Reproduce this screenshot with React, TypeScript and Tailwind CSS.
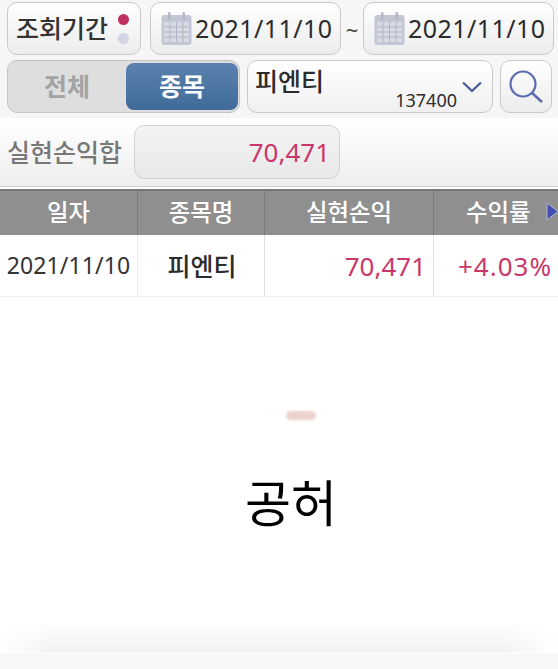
const font = { fontFamily: '"Noto Sans", "Noto Sans CJK KR", sans-serif' };

function Calendar() {
  return (
    <svg width="31" height="35" viewBox="0 0 31 35" className="shrink-0">
      <rect x="0.5" y="4" width="30" height="30" rx="3" fill="#c3c6d4" />
      <rect x="3" y="11" width="25" height="20" fill="#d9dbe4" />
      <path d="M3 16h25M3 21h25M3 26h25M9 11v20M15.500 11v20M22 11v20" stroke="#b0b3c4" strokeWidth="1" />
      <rect x="7" y="1" width="2.500" height="8" rx="1.200" fill="#b4b7c6" />
      <rect x="21.500" y="1" width="2.500" height="8" rx="1.200" fill="#b4b7c6" />
    </svg>
  );
}

function DateBox({ w }: { w: string }) {
  return (
    <div className={`${w} h-[53px] rounded-[10px] border border-[#c9c9c9] bg-gradient-to-b from-white to-[#ececec] flex items-center pl-[10px] gap-[3px]`}>
      <Calendar />
      <span className="text-[25px] leading-none tracking-[0.45px] text-[#2c2c2c]">2021/11/10</span>
    </div>
  );
}

export default function App() {
  return (
    <div style={font} className="w-[558px] h-[669px] bg-white flex flex-col overflow-hidden">
      <div className="bg-[#f6f6f6] h-[118px] pt-[2px] flex flex-col gap-[5px] shrink-0">
        <div className="flex items-center pl-[7px]">
          <div className="w-[134px] h-[53px] rounded-[10px] border border-[#c9c9c9] bg-gradient-to-b from-white to-[#ececec] flex items-center pl-[8px] gap-[10px]">
            <span className="text-[25px] leading-none font-medium text-[#333]">조회기간</span>
            <div className="flex flex-col gap-[8px]">
              <span className="w-[11px] h-[11px] rounded-full bg-[#c2305f]" />
              <span className="w-[11px] h-[11px] rounded-full bg-[#d3d5e2]" />
            </div>
          </div>
          <div className="ml-[9px]"><DateBox w="w-[191px]" /></div>
          <span className="w-[22px] text-center text-[22px] leading-none text-[#444]">~</span>
          <DateBox w="w-[191px]" />
        </div>
        <div className="flex items-center pl-[7px]">
          <div className="w-[233px] h-[53px] rounded-[10px] border border-[#c4c4c4] bg-[#dedede] py-[3px] flex items-center">
            <span className="w-[118px] text-center text-[25px] leading-none font-bold text-[#a3a3a3]">전체</span>
            <span className="w-[112px] h-[47px] rounded-[8px] bg-gradient-to-b from-[#5b82ae] to-[#3f6b98] flex items-center justify-center text-[25px] leading-none font-bold text-white">종목</span>
          </div>
          <div className="ml-[7px] w-[246px] h-[53px] rounded-[10px] border border-[#c9c9c9] bg-gradient-to-b from-white to-[#f0f0f0] relative">
            <span className="absolute left-[7px] top-[5px] text-[25px] leading-[30px] font-medium text-[#2c2c2c]">피엔티</span>
            <span className="absolute right-[35px] top-[28px] text-[18px] leading-[22px] text-[#2c2c2c]">137400</span>
            <svg className="absolute right-[10px] top-[20px]" width="20" height="12" viewBox="0 0 20 12">
              <path d="M1 1.500 L10 10 L19 1.500" fill="none" stroke="#4a5a9c" strokeWidth="2.200" />
            </svg>
          </div>
          <div className="ml-[7px] w-[52px] h-[53px] rounded-[10px] border border-[#c9c9c9] bg-gradient-to-b from-white to-[#ececec] flex items-center justify-center">
            <svg width="36" height="36" viewBox="0 0 36 36">
              <circle cx="15" cy="15" r="12.500" fill="none" stroke="#5a6bb0" strokeWidth="2.200" />
              <path d="M24 24 L34 33" stroke="#5a6bb0" strokeWidth="2.600" />
            </svg>
          </div>
        </div>
      </div>

      <div className="h-[69px] shrink-0 bg-gradient-to-b from-white to-[#eeeeee] flex items-center pl-[7px] border-b border-[#d0d0d0]">
        <span className="w-[127px] text-[25px] leading-none font-medium text-[#777] whitespace-nowrap">실현손익합</span>
        <div className="w-[206px] h-[54px] rounded-[10px] border border-[#d2d2d2] bg-gradient-to-b from-[#f4f4f4] to-[#e8e8e8] flex items-center justify-end pr-[9px] text-[26px] leading-none text-[#c9376b]">
          70,471
        </div>
      </div>

      <div className="h-[2px] shrink-0 bg-white" />

      <div className="h-[46px] shrink-0 bg-[#8f8f8f] border-t-2 border-[#777] grid grid-cols-[138px_127px_169px_124px] text-[23.4px] font-medium text-white">
        <div className="flex items-center justify-center border-r border-[#7c7c7c]">일자</div>
        <div className="flex items-center justify-center border-r border-[#7c7c7c]">종목명</div>
        <div className="flex items-center justify-center border-r border-[#7c7c7c]">실현손익</div>
        <div className="flex items-center pl-[32px] relative">
          수익률
          <svg className="absolute right-0 top-[11px]" width="12" height="19" viewBox="0 0 12 19">
            <path d="M1 1 L12 9.500 L1 18 Z" fill="#4450b0" stroke="#b4b6cc" strokeWidth="1" />
          </svg>
        </div>
      </div>

      <div className="h-[62px] shrink-0 grid grid-cols-[138px_127px_169px_124px] border-b border-[#f0f0f0]">
        <div className="flex items-center justify-center border-r border-[#ececec] text-[23px] leading-none tracking-[0.1px] text-[#333]">2021/11/10</div>
        <div className="flex items-center justify-center pl-[2px] pt-[2px] border-r border-[#dedede] text-[25px] leading-none font-medium text-[#2c2c2c]">피엔티</div>
        <div className="flex items-center justify-end pr-[7px] border-r border-[#dedede] text-[26px] leading-none text-[#c9376b]">70,471</div>
        <div className="flex items-center pl-[24px] text-[26px] leading-none tracking-[1px] text-[#c9376b] whitespace-nowrap">+4.03%</div>
      </div>

      <div className="flex-1 flex flex-col items-start">
        <div className="mt-[114px] ml-[286px] w-[30px] h-[9px] rounded-full bg-[#ecd3cd] blur-[1px]" />
        <div className="mt-[48px] ml-[245px] text-[50px] leading-[70px] text-black">공허</div>
      </div>

      <div className="h-[30px] shrink-0 bg-[linear-gradient(to_right,#ffffff,transparent_10%,transparent_90%,#ffffff),linear-gradient(to_bottom,#ffffff,#f1f1f1)]" />
      <div className="h-px shrink-0 bg-white" />
      <div className="h-[16px] shrink-0 bg-[#f7f7f7]" />
    </div>
  );
}
